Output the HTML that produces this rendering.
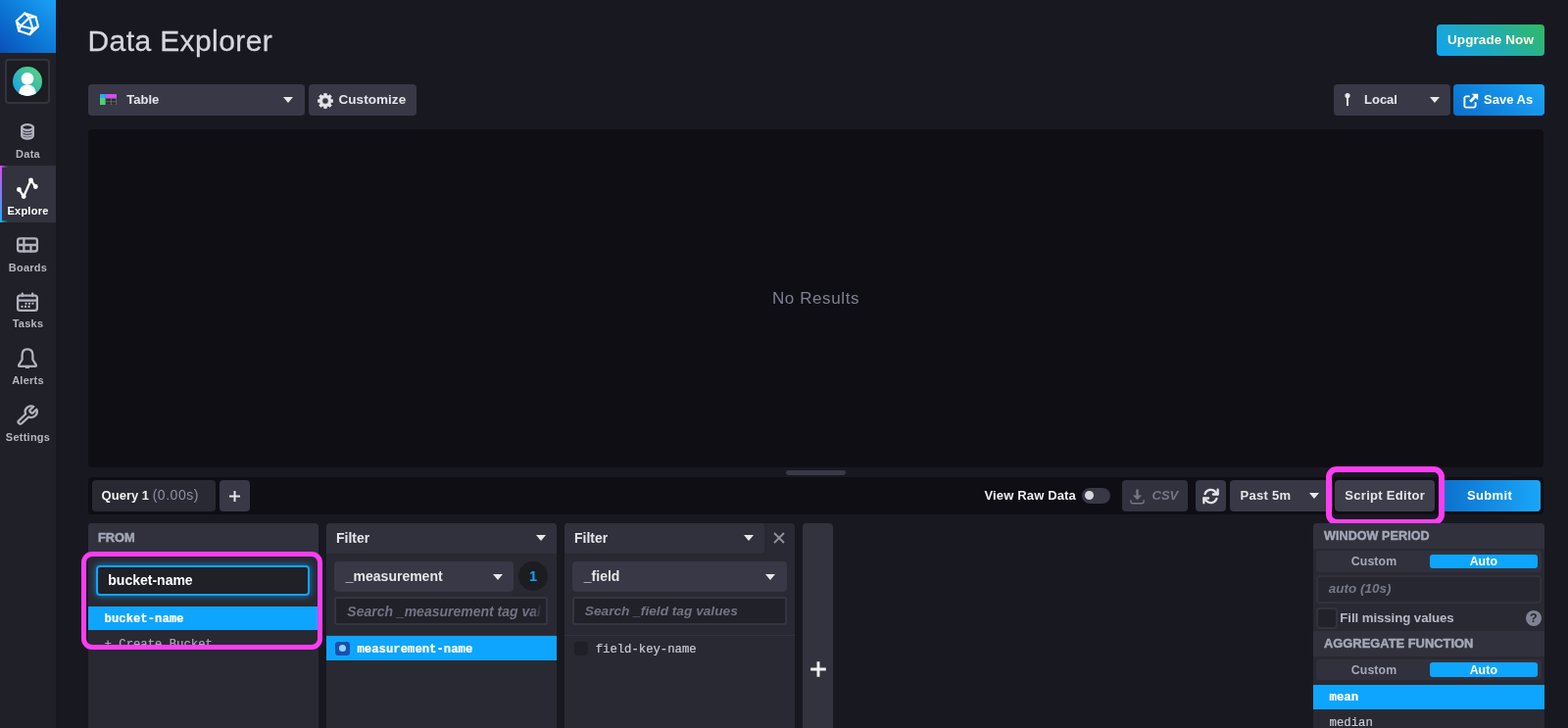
<!DOCTYPE html>
<html lang="en">
<head>
<meta charset="utf-8">
<title>Data Explorer</title>
<style>
*{box-sizing:border-box;margin:0;padding:0}
html,body{width:1600px;height:743px;overflow:hidden;background:#181821;font-family:"Liberation Sans",sans-serif;color:#f1f1f3}
.abs{position:absolute}
#app{will-change:transform;position:relative;width:1600px;height:743px;overflow:hidden}
/* sidebar */
#side{left:0;top:0;width:57px;height:743px;background:#202028}
#logo{left:0;top:0;width:57px;height:54px;background:linear-gradient(45deg,#0a4fb8 0%,#0d7ad8 50%,#1aa3f5 100%)}
#user{left:5px;top:60px;width:46px;height:46px;border:2px solid #33333f;border-radius:4px;background:#1c1c23}
.nl{left:0;width:57px;text-align:center;color:#b4b6c2;letter-spacing:0.250px;font-size:11px;font-weight:bold;line-height:14px;white-space:nowrap}
/* generic */
.btn{border-radius:4px;background:#383846;color:#e4e5ea;font-weight:bold;font-size:13px;line-height:31.600px;height:31.600px}
.t{white-space:nowrap}
.hd{-webkit-text-stroke:0.450px #a4a8b6;font-weight:bold;font-size:12.600px;line-height:26px;color:#a4a8b6}
.tg{left:1343px;width:230px;height:21.800px;border-radius:3px;background:#31313d}
.tgt{text-align:center;font-weight:bold;font-size:12.300px;letter-spacing:0.100px;line-height:21.800px}
.fh{top:534px;font-weight:bold;font-size:14px;line-height:30.500px;color:#e4e5ea}
.dd{top:573.200px;height:30.600px;line-height:30.600px;font-size:14px}
.qb{top:490px;height:31.700px;line-height:31px}
.tri{width:0;height:0;border-left:5.5px solid transparent;border-right:5.5px solid transparent;border-top:6px solid #e8e8ec}
.mono{font-family:"Liberation Mono",monospace;-webkit-text-stroke:0.200px currentColor}
.card{background:#292933;border-radius:4px 4px 0 0}
.chead{background:#31313d;border-radius:4px 4px 0 0}
.inp{border:2px solid #353542;border-radius:3px;background:#212129;color:#717384;font-style:italic;font-weight:bold;font-size:14px}
</style>
</head>
<body>
<div id="app">

<!-- SIDEBAR -->
<div id="side" class="abs"></div>
<div id="logo" class="abs">
<svg class="abs" style="left:0;top:0" width="57" height="54" viewBox="0 0 57 54" fill="none" stroke="#fff" stroke-width="2.100" stroke-linejoin="round" stroke-linecap="round">
<path d="M25.200 13.400 L36.400 17.200 L39 27 L30.400 35.200 L19.200 31.600 L16.800 21.600 Z"/>
<path d="M30 18 L33.400 29.400 L21 26.400 Z"/>
<path d="M25.200 13.400 L30 18 L36.400 17.200 M39 27 L33.400 29.400 L30.400 35.200 M19.200 31.600 L21 26.400 L16.800 21.600"/>
</svg>
</div>
<div id="user" class="abs">
<svg class="abs" style="left:6px;top:6px" width="30" height="30" viewBox="0 0 30 30">
<defs><linearGradient id="ug" x1="0" y1="1" x2="1" y2="0"><stop offset="0.100" stop-color="#1c9fee"/><stop offset="0.550" stop-color="#3cbfa8"/><stop offset="0.950" stop-color="#5cd37c"/></linearGradient>
<clipPath id="uc"><circle cx="15" cy="15" r="15"/></clipPath></defs>
<circle cx="15" cy="15" r="15" fill="url(#ug)"/>
<g clip-path="url(#uc)" fill="#fff"><circle cx="15" cy="12.300" r="6.300"/><path d="M6 30 C6 22 9.500 18.400 15 18.400 C20.500 18.400 24 22 24 30 Z"/></g>
</svg>
</div>

<div class="abs" style="left:0;top:169px;width:57px;height:58px;background:#33333f"></div>
<div class="abs" style="left:0;top:169px;width:2px;height:58px;background:linear-gradient(180deg,#d64cf0,#22adf6)"></div>
<div class="abs" style="left:0;top:169px;width:8px;height:2px;background:linear-gradient(90deg,#d64cf0,rgba(214,76,240,0))"></div>
<div class="abs" style="left:0;top:225px;width:8px;height:2px;background:linear-gradient(90deg,#22adf6,rgba(34,173,246,0))"></div>

<svg class="abs" style="left:0;top:110px" width="57" height="350" viewBox="0 110 57 350" fill="none" stroke="#b0b2be" stroke-width="2.300" stroke-linejoin="round" stroke-linecap="round">
<!-- data -->
<g><ellipse cx="28" cy="130" rx="5.800" ry="2.900"/><path d="M22.200 130v8.600c0 1.600 2.600 2.900 5.800 2.900s5.800-1.300 5.800-2.900v-8.600"/><path d="M22.200 132.900c0 1.600 2.600 2.900 5.800 2.900s5.800-1.300 5.800-2.900M22.200 135.800c0 1.600 2.600 2.900 5.800 2.900s5.800-1.300 5.800-2.900" stroke-width="1.900"/></g>
<!-- explore -->
<g stroke="#fff" fill="#fff"><path d="M19.400 193.500 L24.200 200.500 L31.500 184 L36.300 190.500" fill="none"/><circle cx="19.400" cy="193.500" r="1.300"/><circle cx="24.200" cy="200.500" r="1.300"/><circle cx="31.500" cy="184" r="1.300"/><circle cx="36.300" cy="190.500" r="1.300"/></g>
<!-- boards -->
<g><rect x="18.100" y="243.300" width="19.800" height="13.200" rx="2.200"/><path d="M18.100 250h19.800M24.400 243.300v13.200M31.500 250v6.500"/></g>
<!-- tasks -->
<g><rect x="18.100" y="301.700" width="19.800" height="15.200" rx="2.400"/><path d="M18.100 306.700h19.800M22.800 299.600v2.600M33.200 299.600v2.600"/><path d="M26.600 309.700h.01M30 309.700h.01M33.400 309.700h.01M22.500 312.900h.01M26 312.900h.01M29.600 312.900h.01" stroke-width="2.100" stroke-linecap="square"/></g>
<!-- alerts -->
<g><path d="M28 356.400c-3.500 0-5.400 2.500-5.400 6v4.600l-3.400 5.400c-.4.700-.1 1.400.8 1.400h16c.9 0 1.200-.7.800-1.400l-3.400-5.400v-4.600c0-3.500-1.900-6-5.400-6z"/><path d="M26.800 375.200h2.400" stroke-width="1.800"/></g>
<!-- settings -->
<g transform="translate(15.600 412.500) scale(1.010 0.960)"><path d="M14.700 6.300a1 1 0 0 0 0 1.400l1.600 1.600a1 1 0 0 0 1.400 0l3.770-3.770a6 6 0 0 1-7.940 7.940l-6.910 6.910a2.120 2.120 0 0 1-3-3l6.910-6.910a6 6 0 0 1 7.940-7.940l-3.760 3.760z"/></g>
</svg>
<div class="abs nl" style="top:150px">Data</div>
<div class="abs nl" style="top:208px;color:#fff">Explore</div>
<div class="abs nl" style="top:266px">Boards</div>
<div class="abs nl" style="top:323px">Tasks</div>
<div class="abs nl" style="top:381px">Alerts</div>
<div class="abs nl" style="top:439px">Settings</div>

<!-- HEADER -->
<div class="abs t" style="left:89.500px;top:24px;font-size:30px;line-height:36px;color:#d4d7dd;letter-spacing:0.400px;-webkit-text-stroke:0.300px #d4d7dd">Data Explorer</div>
<div class="abs t" style="left:1466px;top:25px;width:110px;height:32px;border-radius:4px;background:linear-gradient(45deg,#12a3f3 0%,#22abb5 50%,#31ba62 100%);color:#fffce0;font-weight:bold;font-size:13.500px;letter-spacing:0.100px;line-height:32px;text-align:center">Upgrade Now</div>

<!-- TOOLBAR -->
<div class="abs btn" style="left:89.600px;top:86px;width:221.400px">
 <svg class="abs" style="left:12px;top:9.800px" width="17" height="11.600px" viewBox="0 0 17 11.600"><rect x="0" y="0" width="5.800" height="4" fill="#22adf6"/><rect x="5.800" y="0" width="11.200" height="4" fill="#d64cf0"/><rect x="0" y="4" width="5.800" height="7.600" fill="#4ed07a"/><rect x="5.800" y="4" width="11.200" height="7.600" fill="#2b2b35"/><path d="M5.800 4.400h11.200M5.800 7.800h10.800M5.800 11.200h10.800M11.400 4v7.600M16.600 4v7.600" stroke="#7d7e8d" stroke-opacity="0.750" stroke-width="0.900"/></svg>
 <span class="abs t" style="left:39.700px;top:0">Table</span>
 <div class="abs tri" style="left:199px;top:13px"></div>
</div>
<div class="abs btn" style="left:315px;top:86px;width:110px">
 <svg class="abs" style="left:8.700px;top:8.700px" width="16" height="16" viewBox="0 0 16 16" fill="#e4e5ea" fill-rule="evenodd" stroke="#e4e5ea" stroke-width="0.600" stroke-linejoin="round"><path d="M13.82 6.55 L15.79 6.70 L15.79 9.30 L13.82 9.45 L13.14 11.09 L14.43 12.59 L12.59 14.43 L11.09 13.14 L9.45 13.82 L9.30 15.79 L6.70 15.79 L6.55 13.82 L4.91 13.14 L3.41 14.43 L1.57 12.59 L2.86 11.09 L2.18 9.45 L0.21 9.30 L0.21 6.70 L2.18 6.55 L2.86 4.91 L1.57 3.41 L3.41 1.57 L4.91 2.86 L6.55 2.18 L6.70 0.21 L9.30 0.21 L9.45 2.18 L11.09 2.86 L12.59 1.57 L14.43 3.41 L13.14 4.91Z M4.800 8 a3.200 3.200 0 1 0 6.400 0 a3.200 3.200 0 1 0 -6.400 0Z"/></svg>
 <span class="abs t" style="left:30.500px;top:0;font-size:13.500px;letter-spacing:0.050px">Customize</span>
</div>
<div class="abs btn" style="left:1361px;top:86px;width:119px">
 <svg class="abs" style="left:10px;top:8px" width="8" height="16" viewBox="0 0 8 16"><circle cx="4" cy="3.500" r="2.600" fill="#e4e5ea"/><rect x="3" y="4" width="2" height="10" fill="#e4e5ea"/></svg>
 <span class="abs t" style="left:31px;top:0">Local</span>
 <div class="abs tri" style="left:98px;top:13px"></div>
</div>
<div class="abs btn" style="left:1483px;top:86px;width:93px;background:linear-gradient(45deg,#0b6fcb,#1ba6f8);color:#fff">
 <svg class="abs" style="left:9.500px;top:8.500px" width="16" height="16" viewBox="0 0 16 16" fill="none" stroke="#fff" stroke-width="1.900" stroke-linejoin="round"><path d="M12.600 9.300v3.600a1.700 1.700 0 0 1-1.700 1.700h-7.800a1.700 1.700 0 0 1-1.700-1.700v-7.800a1.700 1.700 0 0 1 1.700-1.700h3.600"/><path d="M7.200 8.800l5.200-5.200" stroke-width="2.800"/><path d="M8.800 0.800h6.400v6.400z" fill="#fff" stroke="none"/></svg>
 <span class="abs t" style="left:31px;top:0">Save As</span>
</div>

<!-- RESULTS PANEL -->
<div class="abs" style="left:90px;top:132px;width:1485px;height:345px;background:#0f0e15;border-radius:4px"></div>
<div class="abs t" style="left:90px;top:294px;width:1485px;text-align:center;font-size:17px;letter-spacing:0.600px;line-height:22px;color:#7d8090">No Results</div>
<div class="abs" style="left:801.600px;top:480px;width:61.800px;height:4.700px;border-radius:2.400px;background:#383846"></div>

<!-- QUERY BAR -->
<div class="abs" style="left:90px;top:486.500px;width:1485px;height:38.300px;background:#0f0e15;border-radius:4px"></div>
<div class="abs btn qb" style="left:93.600px;width:126px;background:#292933"><span class="abs t" style="left:10px;top:0;color:#f1f1f3">Query 1 <span style="color:#8e91a1;font-weight:normal;font-size:14px;letter-spacing:0.550px">(0.00s)</span></span></div>
<div class="abs btn qb" style="left:223.500px;width:31.300px">
 <svg class="abs" style="left:9px;top:9.500px" width="13" height="13" viewBox="0 0 13 13"><path d="M6.500 1v11M1 6.500h11" stroke="#e4e5ea" stroke-width="2"/></svg>
</div>
<div class="abs t" style="left:1004.500px;top:490px;font-weight:bold;font-size:13px;letter-spacing:0.150px;line-height:31px;color:#f1f1f3">View Raw Data</div>
<div class="abs" style="left:1103.500px;top:497.500px;width:29px;height:16.600px;border-radius:8.300px;background:#383846"><div class="abs" style="left:3.600px;top:3.800px;width:9px;height:9px;border-radius:5px;background:#d4d7dd"></div></div>
<div class="abs btn qb" style="left:1144.500px;width:67px;background:#32323e;color:#747685;font-style:italic">
 <svg class="abs" style="left:8.300px;top:8.600px" width="15" height="16" viewBox="0 0 15 16"><path d="M6.300 0.500h2.400v6h3.400l-4.600 4.800l-4.600-4.800h3.400z" fill="#747685"/><path d="M0.900 11.200v1.800a1.700 1.700 0 0 0 1.700 1.700h9.800a1.700 1.700 0 0 0 1.700-1.700v-1.800" fill="none" stroke="#747685" stroke-width="1.400"/></svg>
 <span class="abs t" style="left:31px;top:0">CSV</span>
</div>
<div class="abs btn qb" style="left:1220px;width:31px">
 <svg class="abs" style="left:6px;top:7px" width="19" height="19" viewBox="0 0 24 24" fill="none" stroke="#e4e5ea" stroke-width="2.900" stroke-linecap="round" stroke-linejoin="round"><path d="M21 3.500v6h-6"/><path d="M3 20.500v-6h6"/><path d="M4.500 9a8 8 0 0 1 13.500-2.800l3 3.300M3 14.500l3 3.300a8 8 0 0 0 13.500-2.800"/></svg>
</div>
<div class="abs btn qb" style="left:1255px;width:105px">
 <span class="abs t" style="left:10.500px;top:0;letter-spacing:0.300px">Past 5m</span>
 <div class="abs tri" style="left:81px;top:13px"></div>
</div>
<div class="abs btn qb" style="left:1468px;width:103.500px;background:linear-gradient(90deg,#0b6fcb,#1ba6f8);color:#fff"><span class="abs t" style="left:29px;top:0;letter-spacing:0.350px">Submit</span></div>
<div class="abs btn qb" style="left:1362.300px;width:101.700px;background:#3d3d4c"><span class="abs t" style="left:10px;top:0;letter-spacing:0.300px">Script Editor</span></div>
<div class="abs" style="left:1353.300px;top:475.700px;width:120.600px;height:60.300px;border:6px solid #fd3df2;border-radius:11px"></div>

<!-- FROM CARD -->
<div class="abs card" style="left:89.700px;top:534px;width:235px;height:220px"></div>
<div class="abs chead" style="left:89.700px;top:534px;width:235px;height:30px"></div>
<div class="abs t" style="left:100px;top:533.500px;font-weight:bold;font-size:12.800px;line-height:30px;color:#a4a8b6;-webkit-text-stroke:0.500px #a4a8b6">FROM</div>
<div class="abs" style="left:97.500px;top:577px;width:218.500px;height:30.800px;border:2px solid #0ea5ff;border-radius:4px;background:#202027;box-shadow:0 0 6px 1px rgba(14,165,255,.55)"></div>
<div class="abs t" style="left:110.300px;top:577px;font-weight:bold;font-size:14px;line-height:31px;color:#fff">bucket-name</div>
<div class="abs" style="left:89.700px;top:618.500px;width:235px;height:24.500px;background:#0ea5ff"></div>
<div class="abs t mono" style="left:106.600px;top:619.500px;font-size:12.250px;line-height:24.500px;color:#fff;font-weight:bold">bucket-name</div>
<div class="abs t mono" style="left:106.600px;top:645.900px;font-size:12.250px;line-height:24.500px;color:#a4a8b6">+ Create Bucket</div>
<div class="abs" style="left:83px;top:563px;width:246px;height:100px;border:5.500px solid #fd3df2;border-radius:11px"></div>
<div class="abs" style="left:89.700px;top:663px;width:235px;height:20px;background:#292933"></div>

<!-- FILTER 1 -->
<div class="abs card" style="left:333px;top:534px;width:235px;height:220px"></div>
<div class="abs chead" style="left:333px;top:534px;width:235px;height:30.500px"></div>
<div class="abs t fh" style="left:343px">Filter</div>
<div class="abs tri" style="left:546.700px;top:546px"></div>
<div class="abs btn dd" style="left:341.300px;width:183px"><span class="abs t" style="left:11.500px;top:0">_measurement</span><div class="abs tri" style="left:162.200px;top:12.500px"></div></div>
<div class="abs t" style="left:529px;top:573.300px;width:30px;height:30px;border-radius:15px;background:#1c1c21;color:#0ea5ff;font-weight:bold;font-size:14.500px;line-height:30px;text-align:center">1</div>
<div class="abs inp" style="left:341.300px;top:608.800px;width:217.700px;height:29.600px;overflow:hidden"><span class="abs t" style="left:11px;top:0;line-height:26px">Search _measurement tag values</span><div class="abs" style="right:0;top:0;width:14px;height:26px;background:linear-gradient(90deg,rgba(33,33,41,0),#212129 70%)"></div></div>
<div class="abs" style="left:333px;top:647.500px;width:235px;height:1.500px;background:#31313d"></div>
<div class="abs" style="left:333px;top:649px;width:235px;height:24.800px;background:#0ea5ff"></div>
<div class="abs" style="left:342px;top:654.500px;width:14.700px;height:14.700px;border-radius:3px;background:#1a4fb0"><div class="abs" style="left:3.850px;top:3.850px;width:7px;height:7px;border-radius:50%;background:#8fd4ff"></div></div>
<div class="abs t mono" style="left:364.500px;top:651px;font-size:12.280px;line-height:24.800px;color:#fff;font-weight:bold">measurement-name</div>

<!-- FILTER 2 -->
<div class="abs card" style="left:576px;top:534px;width:235px;height:220px"></div>
<div class="abs chead" style="left:576px;top:534px;width:204px;height:30.500px;border-radius:4px"></div>
<div class="abs t fh" style="left:586px">Filter</div>
<div class="abs tri" style="left:758.700px;top:546px"></div>
<svg class="abs" style="left:789px;top:543px" width="12" height="12" viewBox="0 0 12 12"><path d="M1 1l10 10M11 1L1 11" stroke="#8e91a1" stroke-width="1.800"/></svg>
<div class="abs btn dd" style="left:584.300px;width:218.500px"><span class="abs t" style="left:11.500px;top:0">_field</span><div class="abs tri" style="left:197px;top:12.500px"></div></div>
<div class="abs inp" style="left:584.300px;top:608.800px;width:218.500px;height:29.600px;overflow:hidden"><span class="abs t" style="left:10.500px;top:0;line-height:26px;font-size:13.700px">Search _field tag values</span></div>
<div class="abs" style="left:576px;top:647.500px;width:235px;height:1.500px;background:#31313d"></div>
<div class="abs" style="left:585.500px;top:654.500px;width:14.700px;height:14.700px;border-radius:3px;background:#202028"></div>
<div class="abs t mono" style="left:607.700px;top:651px;font-size:12.250px;line-height:24.800px;color:#c6cad3">field-key-name</div>

<!-- ADD COLUMN -->
<div class="abs" style="left:819px;top:534px;width:31px;height:220px;border-radius:4px 4px 0 0;background:#33333f"></div>
<svg class="abs" style="left:827px;top:675px" width="16" height="16" viewBox="0 0 16 16"><path d="M8 0.200v15.600M0.200 8h15.600" stroke="#f1f1f3" stroke-width="2.900"/></svg>

<!-- RIGHT CARD -->
<div class="abs card" style="left:1340px;top:534px;width:235.800px;height:220px"></div>
<div class="abs chead" style="left:1340px;top:534px;width:235.800px;height:26.300px;border-radius:4px 4px 0 0"></div>
<div class="abs t hd" style="left:1351px;top:533.500px;letter-spacing:0.050px">WINDOW PERIOD</div>
<div class="abs tg" style="top:562.300px"></div>
<div class="abs t tgt" style="left:1346px;top:563.300px;width:112px;color:#a4a8b6">Custom</div>
<div class="abs t tgt" style="left:1458.600px;top:565.800px;width:110.500px;height:14.500px;border-radius:3px;background:#0ea5ff;line-height:14.500px;color:#fff">Auto</div>
<div class="abs inp" style="left:1343px;top:587px;width:230px;height:29.400px;background:#272731;border-color:#31313d;border-radius:4px"><span class="abs t" style="left:10.800px;top:-1px;line-height:25.500px;color:#757888;font-size:13.500px">auto (10s)</span></div>
<div class="abs" style="left:1343px;top:620px;width:22px;height:21.500px;border-radius:4px;background:#22222b;border:2px solid #33333f"></div>
<div class="abs t" style="left:1367.300px;top:620px;font-weight:bold;font-size:13.300px;letter-spacing:-0.100px;line-height:21px;color:#b4b7c4">Fill missing values</div>
<div class="abs t" style="left:1556.800px;top:622.700px;width:16.200px;height:16.200px;border-radius:8.100px;background:#7f8292;color:#25252e;font-weight:bold;font-size:12.500px;line-height:17px;text-align:center">?</div>
<div class="abs chead" style="left:1340px;top:644px;width:235.800px;height:25.800px;border-radius:0"></div>
<div class="abs t hd" style="left:1351px;top:643.700px;font-size:12.900px">AGGREGATE FUNCTION</div>
<div class="abs tg" style="top:672.500px"></div>
<div class="abs t tgt" style="left:1346px;top:673.500px;width:112px;color:#a4a8b6">Custom</div>
<div class="abs t tgt" style="left:1458.600px;top:676px;width:110.500px;height:14.500px;border-radius:3px;background:#0ea5ff;line-height:16.500px;color:#fff">Auto</div>
<div class="abs" style="left:1340px;top:698.600px;width:235.800px;height:25px;background:#0ea5ff"></div>
<div class="abs t mono" style="left:1356.600px;top:699.600px;font-size:12.300px;line-height:25px;color:#fff;font-weight:bold">mean</div>
<div class="abs t mono" style="left:1356.600px;top:726px;font-size:12.300px;line-height:25px;color:#c6cad3">median</div>

</div>
</body>
</html>
